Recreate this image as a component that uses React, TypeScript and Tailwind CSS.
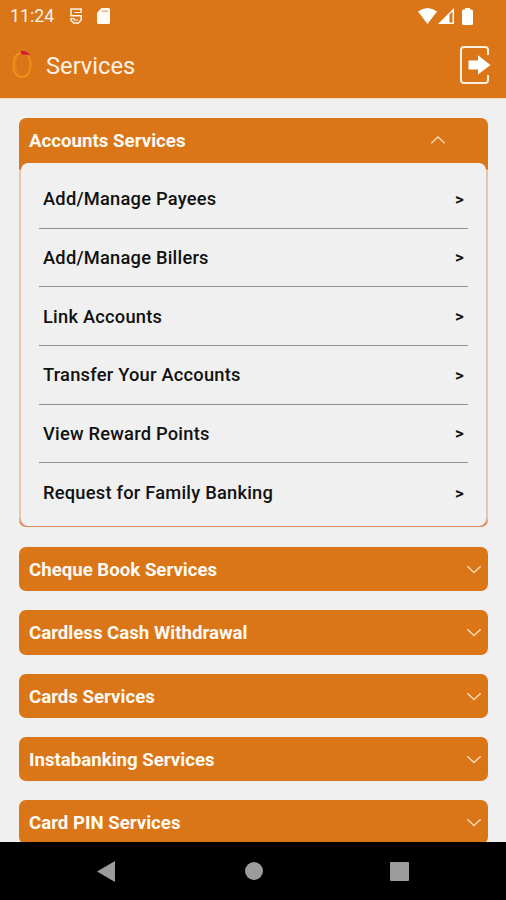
const accountItems = [
  "Add/Manage Payees",
  "Add/Manage Billers",
  "Link Accounts",
  "Transfer Your Accounts",
  "View Reward Points",
  "Request for Family Banking",
];

const sections = [
  "Cheque Book Services",
  "Cardless Cash Withdrawal",
  "Cards Services",
  "Instabanking Services",
  "Card PIN Services",
];

function Chevron({ up = false }: { up?: boolean }) {
  return (
    <svg width="16" height="10" viewBox="0 0 16 10" fill="none" stroke="#fbdcb8" strokeWidth="1.4">
      <path d={up ? "M1.300 7.200 8 1l6.700 6.200" : "M1.300 2.200 8 8.500l6.700-6.300"} />
    </svg>
  );
}

function StatusBar() {
  return (
    <div className="flex h-8 items-center pl-[10px] pr-[32px] text-[#fff4e8]">
      <span className="w-[60px] text-[17.800px] leading-8">11:24</span>

      {/* S-shaped notification */}
      <svg width="12" height="16" viewBox="0 0 12 16" fill="none" stroke="currentColor" strokeWidth="1.500" className="shrink-0">
        <path d="M11.200 4.500V1H1v6.800h10.200v4L8.500 15h-5L1 12.300v-2" />
        <path d="M11.200 4.500H4.500M1 10.500h3v1.500h4" strokeWidth="1.100" />
      </svg>

      {/* SD card */}
      <svg width="13" height="16" viewBox="0 0 13 16" className="ml-[15px] shrink-0">
        <path d="M4.500 0h7Q13 0 13 1.500v13q0 1.500-1.500 1.500h-10Q0 16 0 14.500V5z" fill="#fffaf5" />
        <path d="M4.500 3.200h6.500" stroke="#eeb98c" strokeWidth="1.800" />
      </svg>

      <div className="ml-auto flex items-center">
        <svg width="19" height="16" viewBox="0 0 19 16">
          <path d="M0 3.500Q9.500-3.500 19 3.500L9.500 16z" fill="#fff" />
        </svg>
        <svg width="16" height="16" viewBox="0 0 16 16" className="ml-px">
          <path d="M16 0v16H0z" fill="#fff" />
          <path d="M11.500 6.500 14.500 3.500v11h-3z" fill="#da7518" />
        </svg>
        <svg width="11" height="17" viewBox="0 0 11 17" className="ml-[8px] mr-px">
          <path d="M3 0h5v1.500h1.500Q11 1.500 11 3v12.500q0 1.500-1.500 1.500h-8Q0 17 0 15.500V3Q0 1.500 1.500 1.500H3z" fill="#fff" />
        </svg>
      </div>
    </div>
  );
}

function TopBar() {
  return (
    <div className="flex h-[66px] items-center pl-[11px] pr-[15px]">
      <svg width="22" height="30" viewBox="0 0 22 30" fill="none" className="shrink-0">
        <path d="M10 3.500C4.500 3 2.500 9 2.500 15.500c0 7 3 11.500 8.500 11.500s8.500-5 8.500-12c0-4.500-.8-7.500-2.700-9.700" stroke="#f28e1c" strokeWidth="2" />
        <path d="M6 6C4 10 4 20 7.500 24.500" stroke="#ee891c" strokeWidth="1" />
        <path d="M10 1c3.500-.5 7 .8 9.500 4.500-2.700-1.200-5.500-1.200-9-.8z" fill="#cf1b3b" />
      </svg>
      <h1 className="ml-[13px] pt-px text-[23.700px] leading-8 text-[#fff3e6]">Services</h1>
      <svg width="31" height="38" viewBox="0 0 31 38" fill="none" className="ml-auto">
        <path d="M28 9V4q0-3-3-3H4Q1 1 1 4v30q0 3 3 3h21q3 0 3-3v-5" stroke="#fff1e2" strokeWidth="2" />
        <path d="M8.500 14.500h9.500V9.200L30.500 19 18 28.500V23.500H8.500z" fill="#fff" />
      </svg>
    </div>
  );
}

export default function App() {
  return (
    <div className="flex h-[900px] w-[506px] flex-col overflow-hidden bg-[#f0f0f0] font-['Roboto',sans-serif]">
      <header className="h-[98px] shrink-0 bg-[#da7518]">
        <StatusBar />
        <TopBar />
      </header>

      <main className="min-h-0 flex-1 overflow-hidden border-t border-[#f8d9bd] px-[19px] pt-[19px]">
        {/* Expanded section */}
        <section className="h-[409px] w-[469px] rounded-[7px] bg-[linear-gradient(#da7518_51px,#eac3ab_52px,#eac3ab_400px,#dd8a5c_405px)]">
          <div className="flex h-[45px] items-center justify-between pl-[10px] pr-[42px]">
            <h2 className="text-[18.700px] font-bold leading-6 text-[#fffaf3]">Accounts Services</h2>
            <Chevron up />
          </div>
          <div className="mx-[2px] h-[363px] rounded-[7px] bg-[#f0f0f0] px-[18px] pt-[7px]">
            {accountItems.map((item) => (
              <div
                key={item}
                className="flex h-[58.700px] items-center justify-between border-b border-[#8d8f8e] pl-1 pr-[4px] text-[18.300px] font-medium tracking-[0.230px] text-[#111] last:border-0"
              >
                <span>{item}</span>
                <span className="pt-px text-[17px] font-bold">&gt;</span>
              </div>
            ))}
          </div>
        </section>

        {/* Collapsed sections */}
        <div className="mt-[20px] flex w-[469px] flex-col gap-[19px]">
          {sections.map((title) => (
            <div
              key={title}
              className="flex h-[44.300px] shrink-0 items-center justify-between rounded-[7px] bg-[#da7518] pl-[10px] pr-[6px]"
            >
              <h2 className="pt-[2px] text-[18.650px] font-bold leading-6 text-[#fffaf3]">{title}</h2>
              <Chevron />
            </div>
          ))}
        </div>
      </main>

      {/* System navigation */}
      <nav className="flex h-[58px] shrink-0 items-center justify-between bg-black pl-[97px] pr-[97px]">
        <svg width="18" height="21" viewBox="0 0 18 21" fill="#9c9c9c">
          <path d="M18 0v21L0 10.500z" />
        </svg>
        <div className="ml-[2px] h-[18px] w-[18px] rounded-full bg-[#9c9c9c]" />
        <div className="h-[19px] w-[19px] rounded-[1px] bg-[#9c9c9c]" />
      </nav>
    </div>
  );
}
